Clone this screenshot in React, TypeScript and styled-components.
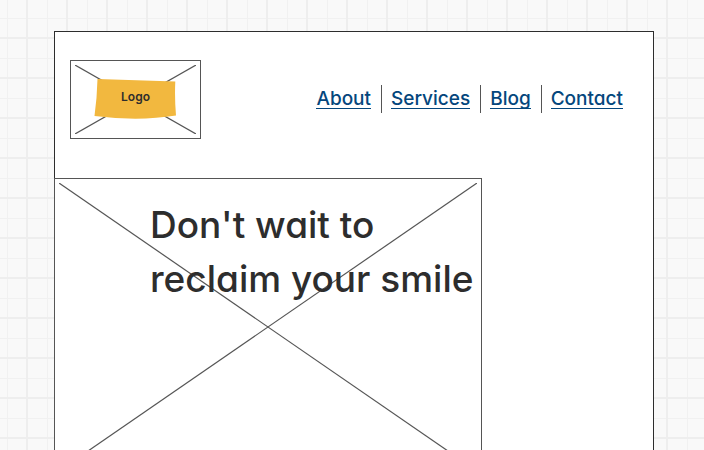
import React from "react";
import styled, { createGlobalStyle } from "styled-components";

const GlobalStyle = createGlobalStyle`
  *, *::before, *::after { box-sizing: border-box; }
  body {
    margin: 0;
    color: #2d2d2d;
    font-family: Inter, "Open Sans", sans-serif;
    font-feature-settings: "cv11";
    background-color: #f9f9f9;
    background-image:
      linear-gradient(to right, #eee 2px, transparent 2px),
      linear-gradient(to bottom, #eee 2px, transparent 2px),
      linear-gradient(to right, #f1f1f1 1px, transparent 1px),
      linear-gradient(to bottom, #f1f1f1 1px, transparent 1px);
    background-size: 40px 40px;
    background-position: 26px 0, 0 37px, 7px 0, 0 18px;
  }
`;

const Canvas = styled.main`
  height: 100vh;
  overflow: hidden;
  padding: 31px 50px 0 54px;
`;

const Frame = styled.div`
  min-height: 100vh;
  border: 1px solid #2d2d2d;
  background: #fff;
`;

const Header = styled.header`
  display: flex;
  align-items: center;
  justify-content: space-between;
  padding: 28px 30px 39px 15px;
`;

const Placeholder = styled.div`
  position: relative;
  border: 1px solid #555;
`;

const LogoBox = styled(Placeholder)`
  display: grid;
  place-items: center;
  width: 131px;
  height: 79px;
`;

const CrossSvg = styled.svg`
  position: absolute;
  inset: 4px;
  width: calc(100% - 8px);
  height: calc(100% - 8px);
  stroke: #555;
  stroke-width: 1.2;
`;

const Badge = styled.div`
  position: relative;
  display: grid;
  place-items: center;
  width: 83px;
  height: 43px;
  padding-bottom: 5px;
  font-size: 12px;
  font-weight: 600;
  line-height: 16px;
`;

const BadgeShape = styled.svg`
  position: absolute;
  inset: 0;
  fill: #f2b83f;
`;

const BadgeText = styled.span`
  position: relative;
`;

const Nav = styled.nav`
  display: flex;
  margin-bottom: 1px;
`;

const NavItem = styled.div`
  display: flex;
  align-items: center;
  height: 28px;
  padding-left: 9px;

  & + & {
    margin-left: 10px;
    border-left: 1px solid #555;
  }
`;

const NavLink = styled.a`
  color: #04467c;
  border-bottom: 1px solid #04467c;
  font-size: 19px;
  font-weight: 500;
  line-height: 19px;
  text-decoration: none;
`;

const Hero = styled(Placeholder)`
  min-height: 298px;
  margin: 0 171px 0 -1px;
  padding: 19px 0 0 95px;
`;

const Title = styled.h1`
  position: relative;
  margin: 0;
  font-size: 37px;
  font-weight: 500;
  line-height: 54px;
  white-space: nowrap;
`;

const Cross = () => (
  <CrossSvg aria-hidden="true">
    <line x1="0" y1="0" x2="100%" y2="100%" />
    <line x1="100%" y1="0" x2="0" y2="100%" />
  </CrossSvg>
);

const links = ["About", "Services", "Blog", "Contact"];

export default function App() {
  return (
    <>
      <GlobalStyle />
      <Canvas>
        <Frame>
          <Header>
            <LogoBox>
              <Cross />
              <Badge>
                <BadgeShape width="83" height="43" viewBox="0 0 83 43" aria-hidden="true">
                  <path d="M3.500 1 L81.300 3.500 Q80.500 20 82 37.500 Q45 43.500 .5 38 Q3 20 3.500 1Z" />
                </BadgeShape>
                <BadgeText>Logo</BadgeText>
              </Badge>
            </LogoBox>
            <Nav aria-label="Main">
              {links.map((label) => (
                <NavItem key={label}>
                  <NavLink href={`#${label.toLowerCase()}`}>{label}</NavLink>
                </NavItem>
              ))}
            </Nav>
          </Header>
          <Hero>
            <Cross />
            <Title>
              Don't wait to
              <br />
              reclaim your smile
            </Title>
          </Hero>
        </Frame>
      </Canvas>
    </>
  );
}
